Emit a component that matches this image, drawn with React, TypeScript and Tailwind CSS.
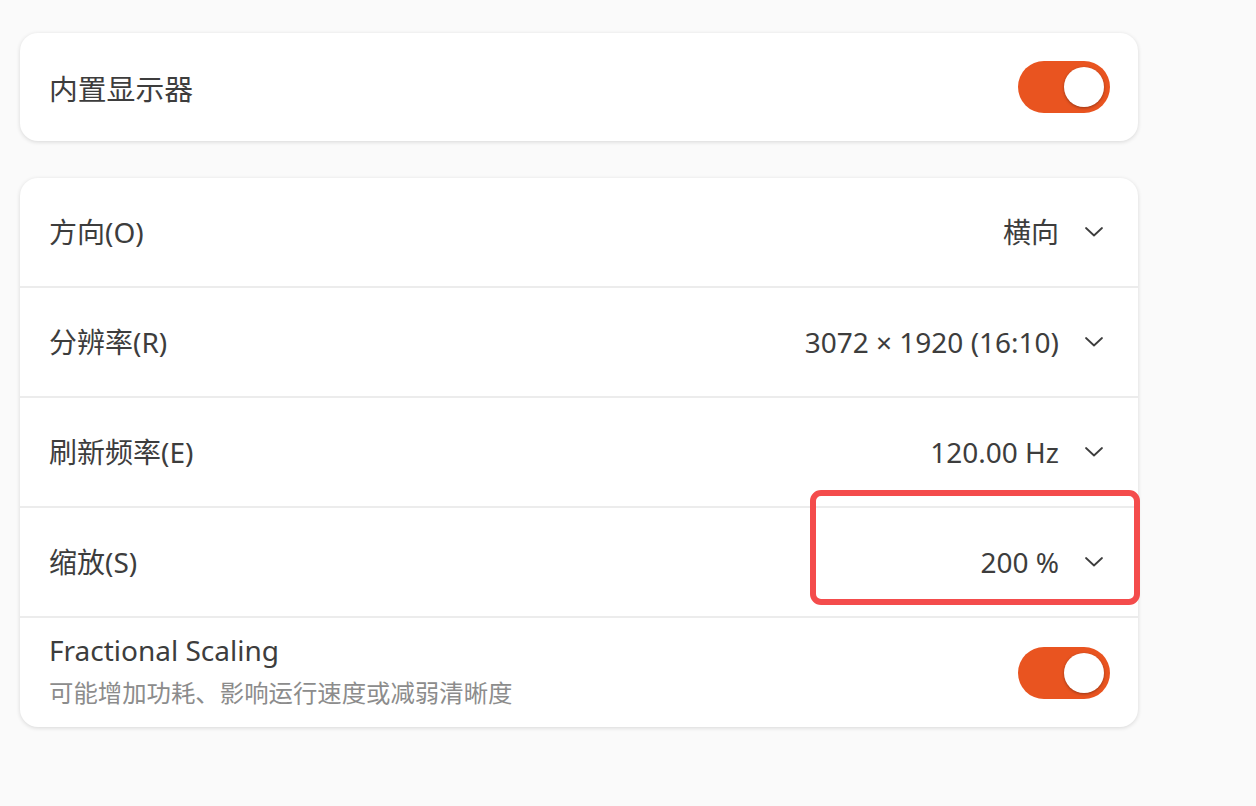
import { ReactNode } from 'react';

const font = { fontFamily: '"Noto Sans", "Noto Sans CJK SC", sans-serif' };

function Toggle() {
  return (
    <div className="relative w-[92px] h-[52px] rounded-full bg-[#e95420] flex items-center justify-end pr-[6px]">
      <div className="w-[40px] h-[40px] rounded-full bg-white shadow-[0_1px_3px_rgba(0,0,0,0.35)]" />
    </div>
  );
}

function Chevron() {
  return (
    <svg width="20" height="12" viewBox="0 0 20 12" className="text-[#3d3d3d]">
      <path d="M2 2 L10 9.5 L18 2" fill="none" stroke="currentColor" strokeWidth="1.8" strokeLinecap="round" strokeLinejoin="round" />
    </svg>
  );
}

function Row({ label, value, last, children }: { label: string; value: string; last?: boolean; children?: ReactNode }) {
  return (
    <div className={`relative h-[110px] flex items-center justify-between pl-[29px] pr-[34px] ${last ? '' : 'border-b-2 border-[#ececec]'}`}>
      <span className="text-[28px] text-[#3d3d3d]">{label}</span>
      <div className="flex items-center gap-[25px]">
        <span className="text-[28px] text-[#3d3d3d]">{value}</span>
        <Chevron />
      </div>
      {children}
    </div>
  );
}

export default function App() {
  return (
    <div className="min-h-[806px] bg-[#fafafa] pt-[33px] pl-[20px]" style={font}>
      <div className="w-[1118px] h-[108px] bg-white rounded-[18px] shadow-[0_1px_4px_rgba(0,0,0,0.14)] flex items-center justify-between pl-[29px] pr-[28px]">
        <span className="text-[28.8px] text-[#3d3d3d] mt-[3px]">内置显示器</span>
        <Toggle />
      </div>

      <div className="mt-[37px] w-[1118px] bg-white rounded-[18px] shadow-[0_1px_4px_rgba(0,0,0,0.14)]">
        <Row label="方向(O)" value="横向" />
        <Row label="分辨率(R)" value="3072 × 1920 (16:10)" />
        <Row label="刷新频率(E)" value="120.00 Hz" />
        <Row label="缩放(S)" value="200 %">
          <div className="absolute left-[790px] top-[-18px] w-[330px] h-[115px] border-[6px] border-[#f44c4c] rounded-[11px]" />
        </Row>
        <div className="h-[109px] flex items-center justify-between pl-[29px] pr-[28px]">
          <div className="flex flex-col -mt-[4px]">
            <span className="text-[28px] leading-[36px] text-[#3d3d3d]">Fractional Scaling</span>
            <span className="text-[24.4px] leading-[34px] text-[#8c8c8c] mt-[8px]">可能增加功耗、影响运行速度或减弱清晰度</span>
          </div>
          <Toggle />
        </div>
      </div>
    </div>
  );
}
